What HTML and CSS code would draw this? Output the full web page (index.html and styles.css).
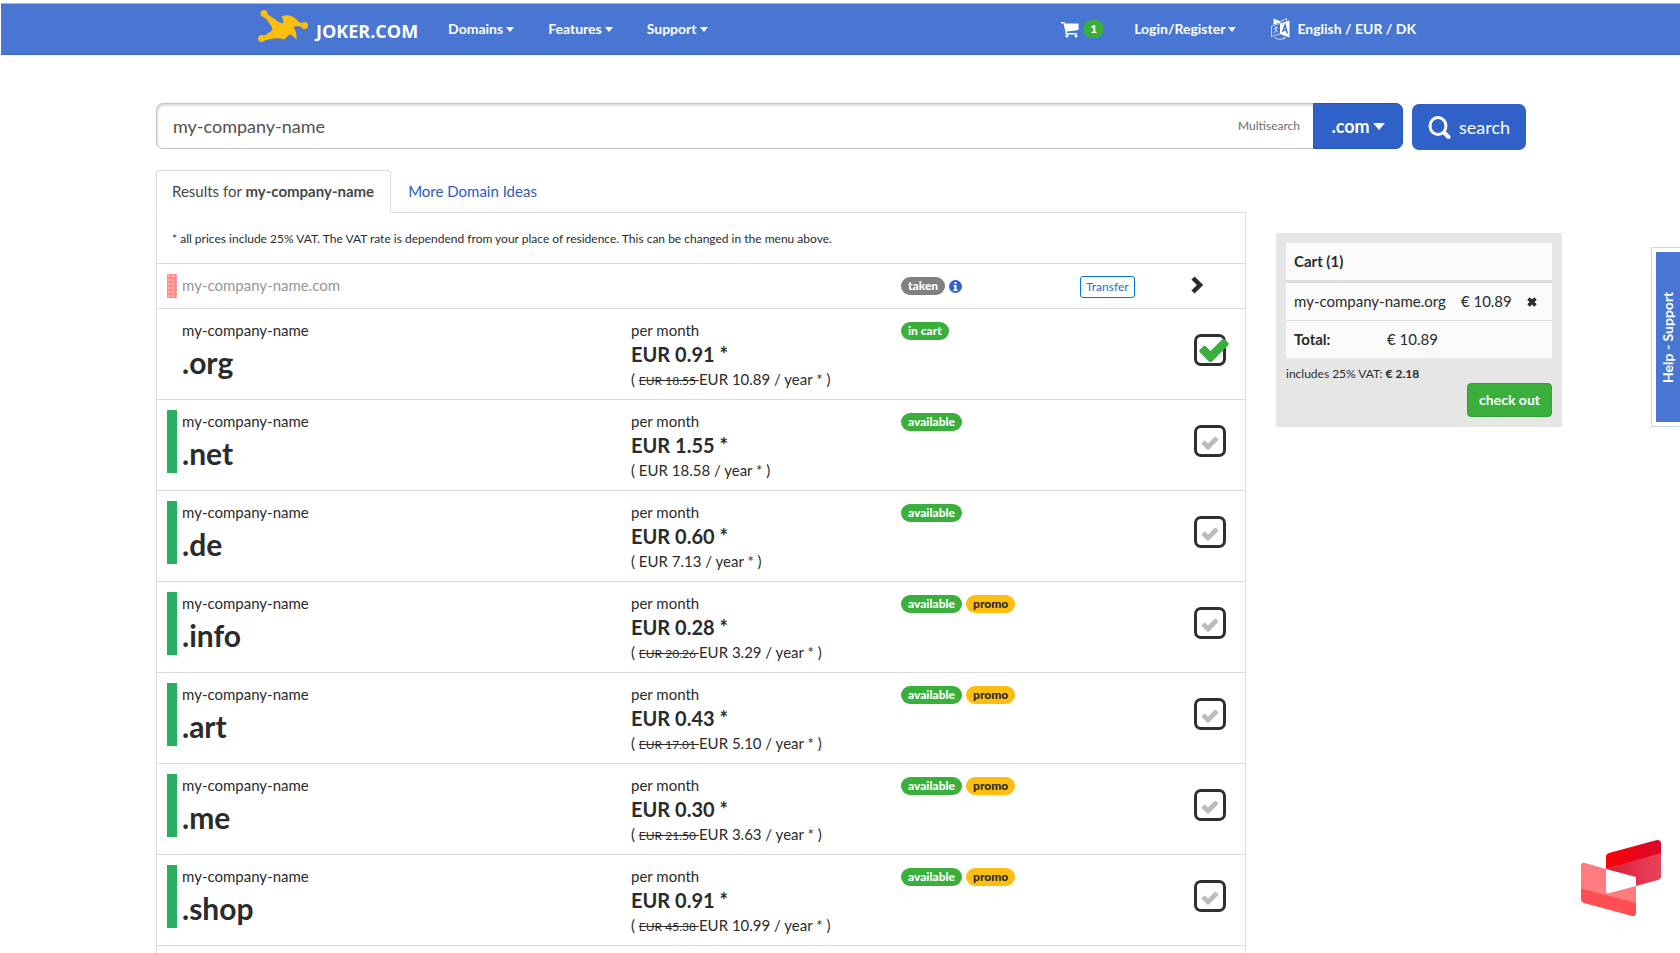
FILE: index.html
```html
<!DOCTYPE html>
<html lang="en">
<head>
<meta charset="utf-8">
<title>Joker.com - Domain search</title>
<link rel="stylesheet" href="styles.css">
</head>
<body>
<svg class="defs" aria-hidden="true">
  <symbol id="check" viewBox="0 0 32 24"><path d="M2 11.500L5 8.500Q6.500 7 8 8.500L12.500 13L24 1.500Q25.500 0 27 1.500L30 4.500Q31.500 6 30 7.500L14 23.500Q12.500 25 11 23.500L2 14.500Q0.500 13 2 11.500Z"/></symbol>
</svg>
<header class="navbar">
  <a class="brand" href="#">
    <svg class="brand-mark" viewBox="0 0 50 32" aria-hidden="true"><g fill="#fdbf0f"><circle cx="6" cy="3.500" r="3.500"/><circle cx="46.500" cy="15.500" r="3.500"/><circle cx="3.500" cy="28.500" r="3.500"/><path d="M6 5L8.500 3.500L21 12L25 13.500Q26 10 23.500 6.500Q32 3 38 9Q41 13 46 13.500V17Q38 15.500 35.500 17Q39 22 38.500 30Q35 25 31.500 24.500L26 29.500Q20 27.500 13 29L4 31L3 27Q10 24 14.500 20Q13 13 5 6Z"/></g></svg>
    <span>JOKER.COM</span>
  </a>
  <nav class="menu">
    <button class="menu-item" type="button">Domains<span class="caret"></span></button>
    <button class="menu-item" type="button">Features<span class="caret"></span></button>
    <button class="menu-item" type="button">Support<span class="caret"></span></button>
  </nav>
  <nav class="account">
    <a class="cart-link" href="#" aria-label="Cart">
      <svg width="18" height="17" viewBox="0 0 18 17" aria-hidden="true"><path fill="#fff" d="M0 1H3.500L4 2.500H17.500V9L6 10.500V12H16V13.500H4.500L4.500 11L2.500 2.500H0Z"/><circle cx="6" cy="15" r="1.500" fill="#fff"/><circle cx="15" cy="15" r="1.500" fill="#fff"/></svg>
      <span class="count">1</span>
    </a>
    <button class="menu-item" type="button">Login/Register<span class="caret"></span></button>
    <button class="menu-item language" type="button">
      <svg width="19" height="22" viewBox="0 0 19 22" aria-hidden="true"><path fill="#fff" d="M9 5.500L18.500 2.500V19.500L9 16Z"/><path fill="#fff" d="M2.500 0.500L11 4L2.500 6.500Z"/><path fill="none" stroke="#fff" stroke-opacity=".7" d="M9 5.500L0.500 8V18.500L9 16M10 3L15.500 0.500V3M3 10.500L7 9.500M5 8.500V10Q5 13 3 15.500M4 11L7 14.500M3.500 19.500Q8 23 14 20M14 20L13 18.500M14 20L12.500 21"/><path fill="none" stroke="#4876d2" stroke-width="1.500" d="M11.500 14L14 7L16.500 15.500M12.500 12L15.500 12.500"/></svg>
      English / EUR / DK</button>
  </nav>
</header>

<main class="page">
  <form class="search">
    <div class="search-group">
      <div class="search-box">
        <input class="search-input" type="text" value="my-company-name" aria-label="Domain name">
        <a class="multisearch" href="#">Multisearch</a>
      </div>
      <button class="tld" type="button">.com<span class="caret caret-lg"></span></button>
    </div>
    <button class="search-btn" type="button">
      <svg width="24" height="24" viewBox="0 0 24 24" aria-hidden="true"><ellipse cx="10" cy="11" rx="8" ry="8.500" fill="none" stroke="#fff" stroke-width="3"/><path d="M16 17.500L20.500 22" stroke="#fff" stroke-width="4" stroke-linecap="round"/></svg>
      search</button>
  </form>

  <div class="columns">
    <section class="results">
      <div class="tabs" role="tablist">
        <button class="tab tab-active" type="button" role="tab" aria-selected="true">Results for <b>my-company-name</b></button>
        <button class="tab" type="button" role="tab" aria-selected="false">More Domain Ideas</button>
      </div>
      <div class="panel">
        <p class="notice">* all prices include 25% VAT. The VAT rate is dependend from your place of residence. This can be changed in the menu above.</p>
        <table class="domains">
          <colgroup><col><col class="col-price"><col class="col-status"><col class="col-action"><col class="col-select"></colgroup>
          <tbody>
            <tr class="taken-row">
              <td><div class="name name-taken">my-company-name.com</div></td>
              <td></td>
              <td><div class="badges"><span class="badge badge-grey">taken</span><svg width="13" height="13" viewBox="0 0 13 13" aria-hidden="true"><circle cx="6.500" cy="6.500" r="6.500" fill="#3061c8"/><path fill="#fff" d="M5.500 2H7.500V4H5.500ZM4.500 5H7.500V9.500H8.500V11H4.500V9.500H5.500V6.500H4.500Z"/></svg></div></td>
              <td><button class="transfer" type="button">Transfer</button></td>
              <td><button class="expand" type="button" aria-label="Show more"><svg width="12" height="18" viewBox="0 0 12 18" aria-hidden="true"><path d="M2 2L9 9L2 16" fill="none" stroke="#2b2b2b" stroke-width="4.500"/></svg></button></td>
            </tr>
            <tr>
              <td><div class="name name-cart">my-company-name<strong>.org</strong></div></td>
              <td><div class="price">per month<strong>EUR 0.91 *</strong><span>( <s>EUR 18.55 </s>EUR 10.89 / year * )</span></div></td>
              <td><div class="badges"><span class="badge">in cart</span></div></td><td></td>
              <td><label class="pick"><input type="checkbox" checked aria-label="my-company-name.org"><svg class="tick"><use href="#check"/></svg></label></td>
            </tr>
            <tr>
              <td><div class="name">my-company-name<strong>.net</strong></div></td>
              <td><div class="price">per month<strong>EUR 1.55 *</strong><span>( EUR 18.58 / year * )</span></div></td>
              <td><div class="badges"><span class="badge">available</span></div></td><td></td>
              <td><label class="pick"><input type="checkbox" aria-label="my-company-name.net"><svg class="tick"><use href="#check"/></svg></label></td>
            </tr>
            <tr>
              <td><div class="name">my-company-name<strong>.de</strong></div></td>
              <td><div class="price">per month<strong>EUR 0.60 *</strong><span>( EUR 7.13 / year * )</span></div></td>
              <td><div class="badges"><span class="badge">available</span></div></td><td></td>
              <td><label class="pick"><input type="checkbox" aria-label="my-company-name.de"><svg class="tick"><use href="#check"/></svg></label></td>
            </tr>
            <tr>
              <td><div class="name">my-company-name<strong>.info</strong></div></td>
              <td><div class="price">per month<strong>EUR 0.28 *</strong><span>( <s>EUR 20.26 </s>EUR 3.29 / year * )</span></div></td>
              <td><div class="badges"><span class="badge">available</span><span class="badge badge-promo">promo</span></div></td><td></td>
              <td><label class="pick"><input type="checkbox" aria-label="my-company-name.info"><svg class="tick"><use href="#check"/></svg></label></td>
            </tr>
            <tr>
              <td><div class="name">my-company-name<strong>.art</strong></div></td>
              <td><div class="price">per month<strong>EUR 0.43 *</strong><span>( <s>EUR 17.01 </s>EUR 5.10 / year * )</span></div></td>
              <td><div class="badges"><span class="badge">available</span><span class="badge badge-promo">promo</span></div></td><td></td>
              <td><label class="pick"><input type="checkbox" aria-label="my-company-name.art"><svg class="tick"><use href="#check"/></svg></label></td>
            </tr>
            <tr>
              <td><div class="name">my-company-name<strong>.me</strong></div></td>
              <td><div class="price">per month<strong>EUR 0.30 *</strong><span>( <s>EUR 21.50 </s>EUR 3.63 / year * )</span></div></td>
              <td><div class="badges"><span class="badge">available</span><span class="badge badge-promo">promo</span></div></td><td></td>
              <td><label class="pick"><input type="checkbox" aria-label="my-company-name.me"><svg class="tick"><use href="#check"/></svg></label></td>
            </tr>
            <tr>
              <td><div class="name">my-company-name<strong>.shop</strong></div></td>
              <td><div class="price">per month<strong>EUR 0.91 *</strong><span>( <s>EUR 45.38 </s>EUR 10.99 / year * )</span></div></td>
              <td><div class="badges"><span class="badge">available</span><span class="badge badge-promo">promo</span></div></td><td></td>
              <td><label class="pick"><input type="checkbox" aria-label="my-company-name.shop"><svg class="tick"><use href="#check"/></svg></label></td>
            </tr>
          </tbody>
        </table>
      </div>
    </section>

    <aside class="cart">
      <h2 class="cart-title">Cart (1)</h2>
      <div class="cart-row">
        <span>my-company-name.org</span><span>€ 10.89</span>
        <button class="remove" type="button" aria-label="Remove"><svg width="10" height="10" viewBox="0 0 10 10" aria-hidden="true"><path d="M1.500 1.500L8.500 8.500M8.500 1.500L1.500 8.500" stroke="#2b2b2b" stroke-width="3.500"/></svg></button>
      </div>
      <div class="cart-total"><b>Total:</b><span>€ 10.89</span></div>
      <p class="cart-vat">includes 25% VAT: <b>€ 2.18</b></p>
      <button class="checkout" type="button">check out</button>
    </aside>
  </div>
</main>

<div class="help"><button class="help-btn" type="button">Help - Support</button></div>
<svg class="corner-logo" viewBox="0 0 80 76" aria-hidden="true">
  <defs>
    <linearGradient id="red"><stop offset="0" stop-color="#fb0007"/><stop offset="1" stop-color="#d60a2c"/></linearGradient>
    <linearGradient id="rose"><stop offset="0" stop-color="#dc1c36"/><stop offset="1" stop-color="#e8445c"/></linearGradient>
  </defs>
  <path fill="url(#rose)" d="M25 29L80 12V36Q80 39 77 40L55 46V37Z"/>
  <path fill="url(#red)" d="M25 29V16Q25 14 28 13L76 0Q80 0 80 3V13Z"/>
  <path fill="#ff7c7e" d="M0 26Q0 22 4 23L25 29V52Q26 54 29 53L55 46V64L0 49Z"/>
  <path fill="#ff4f53" d="M0 49L2 49L55 63V73Q55 77 51 76L3 63Q0 62 0 59Z"/>
</svg>
</body>
</html>
```

FILE: styles.css
```css
* { box-sizing: border-box; }
body {
  display: flex;
  flex-direction: column;
  min-height: 100vh;
  margin: 0;
  background: #fff;
  color: #2b2b2b;
  font: 15px/24px Lato, "Liberation Sans", sans-serif;
}
button { border: 0; padding: 0; background: none; color: inherit; font: inherit; cursor: pointer; }
a { color: inherit; text-decoration: none; }
.defs { position: absolute; width: 0; height: 0; }

/* Top bar */
.navbar {
  display: flex;
  align-items: center;
  height: 52px;
  margin: 3px 0 0 1px;
  padding: 0 264px 0 257px;
  border-top: 1px solid #a9b4c8;
  border-bottom: 1px solid #3d66bd;
  background: #4876d2;
  color: #fff;
}
.brand { display: flex; align-items: center; gap: 8px; font: bold 18px/24px "Open Sans", sans-serif; }
.brand span { padding-top: 3px; }
.brand-mark { width: 50px; height: 32px; margin-bottom: 6px; }
.menu, .account { display: flex; align-items: center; gap: 34px; font-size: 14px; font-weight: bold; }
.menu { margin-left: 30px; }
.account { margin-left: auto; gap: 30px; }
.menu-item { display: flex; align-items: center; gap: 3px; white-space: nowrap; }
.language { gap: 7px; margin-left: 5px; }
.caret { border: 4px solid transparent; border-top: 5px solid; border-bottom: 0; }
.caret-lg { border-width: 6px; border-top-width: 7px; border-bottom: 0; }
.cart-link { display: flex; align-items: center; gap: 4px; }
.count {
  width: 21px;
  border-radius: 9px;
  background: #3aaf3c;
  font-size: 12px;
  font-weight: 900;
  line-height: 18px;
  text-align: center;
}

/* Search */
.page { display: flex; flex: 1; flex-direction: column; padding: 48px 118px 0 156px; }
.search { display: flex; gap: 9px; margin-right: 36px; }
.search-group { display: flex; flex: 1; height: 46px; }
.search-box {
  display: flex;
  flex: 1;
  align-items: center;
  border: 1px solid #c4c4c4;
  border-right: 0;
  border-radius: 7px 0 0 7px;
  box-shadow: inset 1px 2px 2px #ddd;
}
.search-input {
  flex: 1;
  padding: 0 16px;
  border: 0;
  outline: 0;
  background: none;
  color: #505050;
  font: 18px/24px Lato, sans-serif;
}
.multisearch { margin-right: 13px; color: #6c6c6c; font-size: 12px; }
.tld, .search-btn {
  display: flex;
  align-items: center;
  justify-content: center;
  background: #3061c8;
  color: #fff;
  font-size: 18px;
}
.tld { gap: 3px; width: 90px; border: 1px solid #2858b5; border-radius: 0 7px 7px 0; font-weight: bold; }
.search-btn { gap: 7px; width: 114px; height: 46px; margin-top: 1px; border-radius: 7px; }

/* Results */
.columns { display: flex; flex: 1; align-items: stretch; gap: 30px; margin-top: 20px; }
.results { display: flex; flex: 1; flex-direction: column; }
.tabs { display: flex; z-index: 1; }
.tab { height: 43px; padding: 0 17px 2px; color: #3158c4; font-size: 15px; }
.tab-active {
  padding: 0 16px 2px 15px;
  border: 1px solid #dcdcdc;
  border-bottom-color: #fff;
  border-radius: 4px 4px 0 0;
  background: #fff;
  color: #484848;
}
.panel { flex: 1; margin-top: -1px; border: 1px solid #dcdcdc; border-bottom: 0; }
.notice { margin: 0; padding: 14px 15px 12px; font-size: 12px; }
.domains { width: 100%; border-collapse: collapse; border-bottom: 1px solid #dcdcdc; table-layout: fixed; }
.col-price { width: 270px; }
.col-status { width: 179px; }
.col-action { width: 114px; }
.col-select { width: 51px; }
.domains td { height: 91px; padding: 10px 0 0; border-top: 1px solid #dcdcdc; vertical-align: top; }
.domains .taken-row td { height: 45px; }
.name { height: 63px; margin-left: 10px; padding-left: 5px; border-left: 10px solid #27ae60; line-height: 22px; }
.name-cart { border-color: transparent; }
.name-taken {
  height: 24px;
  padding-left: 15px;
  border: 0;
  background:
    linear-gradient(90deg, transparent 10px, #fff 10px),
    radial-gradient(circle, #ffb4b4 1px, #ff8b8b 1px) 0 0 / 4px 4px;
  color: #979797;
}
.name strong { display: block; font-size: 30px; line-height: 42px; }
.price { line-height: 22px; }
.price strong { display: block; font-size: 20px; line-height: 27px; }
.price span { display: block; }
.price s { font-size: 12px; }
.badges { display: flex; align-items: center; gap: 4px; padding-top: 3px; }
.badge {
  padding: 0 7px;
  border-radius: 9px;
  background: #3aaf3c;
  color: #fff;
  font-size: 12px;
  font-weight: 900;
  line-height: 18px;
}
.badge-grey { background: #808080; }
.badge-promo { background: #fdbe10; color: #2b2b2b; }
.transfer {
  display: block;
  height: 22px;
  margin-top: 2px;
  padding: 0 5px;
  border: 1px solid #0275d8;
  border-radius: 3px;
  color: #2f6bd0;
  font-size: 12px;
  line-height: 20px;
}
.expand { display: block; margin: 2px 0 0 -3px; }
.expand svg { display: block; }
.pick { display: block; position: relative; width: 32px; margin-top: 15px; }
.pick input {
  display: block;
  width: 32px;
  height: 32px;
  margin: 0;
  border: 3px solid #2f2f2f;
  border-radius: 7px;
  appearance: none;
}
.tick { position: absolute; top: 11px; left: 7px; width: 18px; height: 14px; fill: #bcbcbc; }
.pick input:checked + .tick { top: 4px; left: 4px; width: 32px; height: 24px; fill: #3aaf3c; }

/* Cart */
.cart { align-self: flex-start; width: 286px; margin-top: 63px; padding: 10px; background: #e6e6e6; }
.cart-title { margin: 0; padding: 6px 8px 7px; background: #fafafa; font-size: 15px; line-height: 24px; }
.cart-row, .cart-total { display: flex; padding: 6px 8px 7px; background: #fafafa; }
.cart-row { gap: 15px; border-top: 3px solid #dcdcdc; }
.cart-total { border-top: 1px solid #dcdcdc; }
.cart-total b { width: 93px; }
.cart-vat { margin: 0; padding-top: 4px; font-size: 12px; }
.checkout {
  display: block;
  height: 34px;
  margin: -3px 0 0 auto;
  padding: 0 11px;
  border: 1px solid #34a036;
  border-radius: 4px;
  background: #3aaf3c;
  color: #fff;
  font-size: 14px;
  font-weight: bold;
}

/* Floating items */
.help {
  display: flex;
  position: fixed;
  top: 247px;
  right: 0;
  padding: 4px 0 4px 4px;
  border: 1px solid #cbd7f1;
  border-right: 0;
}
.help-btn {
  width: 24px;
  height: 170px;
  background: #4876d2;
  color: #fff;
  font-size: 14px;
  font-weight: bold;
  line-height: 24px;
  writing-mode: vertical-rl;
  rotate: 180deg;
}
.corner-logo { position: fixed; right: 19px; bottom: 37px; width: 80px; height: 76px; }
```
